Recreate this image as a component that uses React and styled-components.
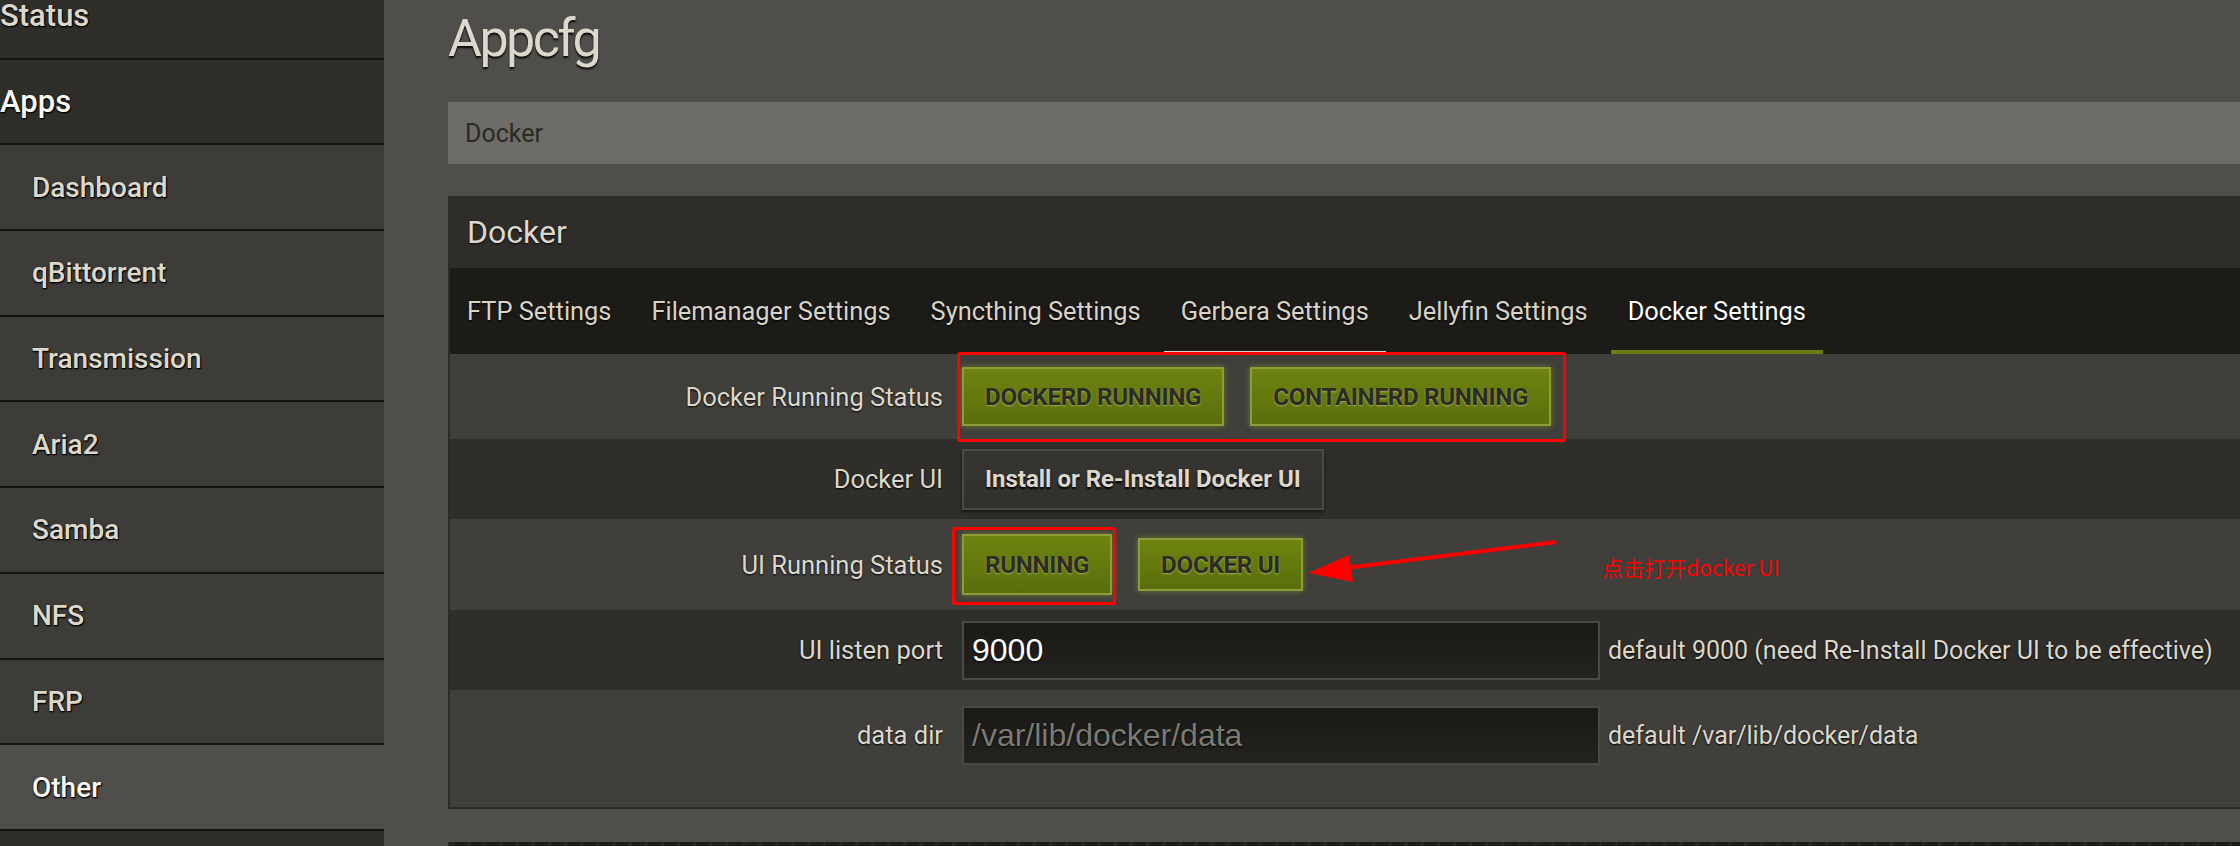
import React from 'react';
import styled, { createGlobalStyle } from 'styled-components';

const Global = createGlobalStyle`
  html, body { margin: 0; padding: 0; background: #4f4e4a; overflow: hidden; }
  body { font-family: Roboto, "Noto Sans", sans-serif; }
  * { box-sizing: border-box; }
`;

const Page = styled.div`
  display: flex;
  align-items: flex-start;
  width: 2240px;
  height: 846px;
  overflow: hidden;
  background: #4f4e4a;
`;

const Sidebar = styled.nav`
  flex: 0 0 384px;
  align-self: stretch;
  background: #2f2e2a;
  overflow: hidden;
`;

const NavList = styled.ul`
  list-style: none;
  margin: -26px 0 0;
  padding: 0;
`;

const NavItem = styled.li`
  height: 85.7px;
  display: flex;
  align-items: center;
  border-bottom: 2px solid #151412;
  padding-left: ${p => (p.$sub ? '32px' : '0')};
  background: ${p => (p.$active ? '#4f4e4a' : p.$sub ? '#3d3c38' : '#2f2e2a')};
  color: ${p => (p.$bright ? '#fbfaf5' : '#dcd8cc')};
  font-size: ${p => (p.$sub ? '28px' : '31px')};
  font-weight: 500;
  text-shadow: 0 1px 2px rgba(0, 0, 0, 0.95), 1px 1px 1px #000;
`;

const Main = styled.main`
  flex: 1;
  min-width: 0;
  padding-left: 64px;
`;

const Title = styled.h2`
  height: 102px;
  margin: 0;
  padding-top: 13px;
  font-size: 52px;
  line-height: 52px;
  font-weight: 400;
  letter-spacing: -2.5px;
  color: #dcd8cc;
  text-shadow: 0 2px 2px rgba(0, 0, 0, 0.9);
`;

const Breadcrumb = styled.div`
  height: 62px;
  display: flex;
  align-items: center;
  padding-left: 17px;
  background: #6d6c68;
  color: #2a2925;
  font-size: 25px;
`;

const Panel = styled.section`
  margin-top: 32px;
  background: #403f3b;
  border-left: 2px solid #2c2b27;
  border-bottom: 2px solid #2c2b27;
  padding-bottom: 27px;
`;

const PanelHead = styled.h3`
  height: 72px;
  margin: 0;
  display: flex;
  align-items: center;
  padding-left: 17px;
  background: #2e2d29;
  color: #dcd8cc;
  font-size: 32px;
  font-weight: 400;
  text-shadow: 0 1px 2px rgba(0, 0, 0, 0.9);
`;

const Tabs = styled.ul`
  list-style: none;
  margin: 0;
  padding: 0;
  height: 86px;
  display: flex;
  background: #1c1b17;
`;

const Tab = styled.li`
  display: flex;
  align-items: center;
  padding: 0 17px;
  margin-right: 6px;
  font-size: 25.4px;
  color: ${p => (p.$state === 'active' ? '#ffffff' : '#d8d4c8')};
  box-shadow: ${p =>
    p.$state === 'active'
      ? 'inset 0 -4px 0 #6b7a12'
      : p.$state === 'hover'
      ? 'inset 0 -3px 0 #d8d4c8'
      : 'none'};
  text-shadow: 0 1px 2px #000;
`;

const Row = styled.div`
  height: ${p => p.$h}px;
  display: grid;
  grid-template-columns: 493px 1fr;
  column-gap: 19px;
  align-items: center;
  background: ${p => (p.$alt ? '#2f2e2a' : '#403f3b')};
`;

const Label = styled.label`
  text-align: right;
  font-size: 25.5px;
  color: #dcd8cc;
  text-shadow: 0 1px 2px rgba(0, 0, 0, 0.95);
`;

const Controls = styled.div`
  position: relative;
  align-self: stretch;
  display: flex;
  align-items: center;
  gap: ${p => p.$gap ?? 26}px;
`;

const Group = styled.div`
  position: relative;
  display: flex;
  gap: 26px;
`;

const GreenButton = styled.button`
  height: ${p => p.$h ?? 59}px;
  padding: 0 21px;
  border: 2px solid #8c9d3a;
  background: linear-gradient(#6e840f, #5a6e0b);
  box-shadow: 0 0 6px rgba(150, 175, 40, 0.55);
  color: #2c2c25;
  font-family: Roboto, sans-serif;
  font-weight: 700;
  font-size: 24.2px;
  letter-spacing: -0.3px;
  text-shadow: 0 1px 2px rgba(215, 225, 165, 0.55);
  cursor: pointer;
`;

const DarkButton = styled.button`
  height: 61px;
  padding: 0 21px;
  border: 2px solid #4b4a46;
  background: linear-gradient(#363531, #31302c);
  box-shadow: 0 2px 3px rgba(0, 0, 0, 0.55);
  color: #dcd8cc;
  font-family: Roboto, sans-serif;
  font-weight: 700;
  font-size: 24px;
  text-shadow: 0 2px 2px #000;
  cursor: pointer;
`;

const TextInput = styled.input`
  width: 638px;
  height: 59px;
  padding: 0 8px;
  border: 2px solid #4a4945;
  background: linear-gradient(#1a1915, #24231f);
  color: #ffffff;
  font-family: "Liberation Sans", Arial, sans-serif;
  font-size: 32px;
  text-shadow: 0 1px 2px #000;
  outline: none;
  &::placeholder {
    color: #7c7a75;
  }
`;

const Help = styled.span`
  font-size: 25px;
  color: #dcd8cc;
  text-shadow: 0 1px 2px rgba(0, 0, 0, 0.95);
  white-space: nowrap;
`;

const RedBox = styled.span`
  position: absolute;
  inset: ${p => p.$inset};
  border: 3px solid #ff0000;
  border-radius: 3px;
  pointer-events: none;
`;

const ArrowMark = styled.svg`
  position: absolute;
  left: 338px;
  top: 16px;
  width: 262px;
  height: 45px;
  overflow: visible;
`;

const Note = styled.span`
  position: absolute;
  left: 640px;
  top: 38px;
  font-family: "Noto Sans CJK SC", "Noto Sans", sans-serif;
  font-size: 21px;
  line-height: 21px;
  color: #ff0000;
  white-space: nowrap;
`;

const NextPanel = styled.div`
  margin-top: 33px;
  height: 40px;
  border-left: 2px solid #2c2b27;
  background: repeating-linear-gradient(
    -60deg,
    #1e1d1a 0,
    #1e1d1a 12px,
    #2a2925 12px,
    #2a2925 14px
  );
`;

const navItems = [
  { t: 'Status' },
  { t: 'Apps', bright: true },
  { t: 'Dashboard', sub: true },
  { t: 'qBittorrent', sub: true },
  { t: 'Transmission', sub: true },
  { t: 'Aria2', sub: true },
  { t: 'Samba', sub: true },
  { t: 'NFS', sub: true },
  { t: 'FRP', sub: true },
  { t: 'Other', sub: true, active: true, bright: true },
  { t: '' },
];

const tabs = [
  { t: 'FTP Settings' },
  { t: 'Filemanager Settings' },
  { t: 'Syncthing Settings' },
  { t: 'Gerbera Settings', s: 'hover' },
  { t: 'Jellyfin Settings' },
  { t: 'Docker Settings', s: 'active' },
];

export default function App() {
  return (
    <Page>
      <Global />
      <Sidebar>
        <NavList>
          {navItems.map((n, i) => (
            <NavItem key={i} $sub={n.sub} $active={n.active} $bright={n.bright}>
              {n.t}
            </NavItem>
          ))}
        </NavList>
      </Sidebar>
      <Main>
        <Title>Appcfg</Title>
        <Breadcrumb>Docker</Breadcrumb>
        <Panel>
          <PanelHead>Docker</PanelHead>
          <Tabs>
            {tabs.map(t => (
              <Tab key={t.t} $state={t.s}>
                {t.t}
              </Tab>
            ))}
          </Tabs>
          <Row $h={85}>
            <Label>Docker Running Status</Label>
            <Controls>
              <Group>
                <GreenButton>DOCKERD RUNNING</GreenButton>
                <GreenButton>CONTAINERD RUNNING</GreenButton>
                <RedBox $inset="-15px -15px -16px -5px" />
              </Group>
            </Controls>
          </Row>
          <Row $h={80} $alt>
            <Label>Docker UI</Label>
            <Controls>
              <DarkButton>Install or Re-Install Docker UI</DarkButton>
            </Controls>
          </Row>
          <Row $h={91}>
            <Label>UI Running Status</Label>
            <Controls>
              <Group>
                <GreenButton $h={61}>RUNNING</GreenButton>
                <RedBox $inset="-7px -4px -10px -10px" />
              </Group>
              <GreenButton $h={53}>DOCKER UI</GreenButton>
              <ArrowMark viewBox="1300 535 262 45">
                <line x1="1556" y1="542" x2="1345" y2="568" stroke="#ff0000" strokeWidth="4" />
                <polygon points="1308,573 1349,555 1353,582" fill="#ff0000" />
              </ArrowMark>
              <Note>点击打开docker UI</Note>
            </Controls>
          </Row>
          <Row $h={80} $alt>
            <Label>UI listen port</Label>
            <Controls $gap={8}>
              <TextInput defaultValue="9000" />
              <Help>default 9000 (need Re-Install Docker UI to be effective)</Help>
            </Controls>
          </Row>
          <Row $h={90}>
            <Label>data dir</Label>
            <Controls $gap={8}>
              <TextInput placeholder="/var/lib/docker/data" />
              <Help>default /var/lib/docker/data</Help>
            </Controls>
          </Row>
        </Panel>
        <NextPanel />
      </Main>
    </Page>
  );
}
